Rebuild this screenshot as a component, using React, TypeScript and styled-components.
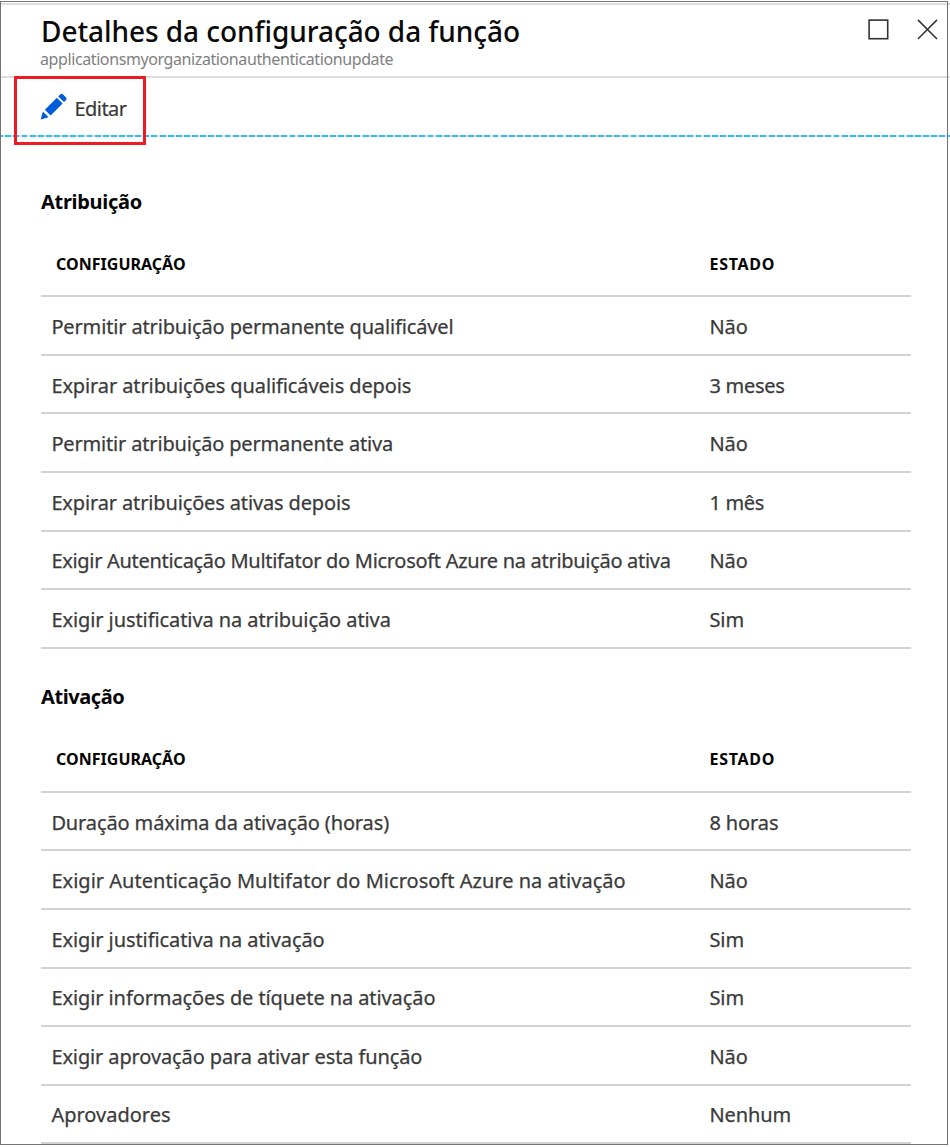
import React from "react";
import styled, { createGlobalStyle } from "styled-components";

const GlobalStyle = createGlobalStyle`
  *, *::before, *::after { box-sizing: border-box; }
  body {
    margin: 0;
    background: #fff;
    font-family: "Noto Sans", "Segoe UI", sans-serif;
    color: #3a3a3a;
  }
`;

const Page = styled.main`
  position: relative;
  width: 950px;
  height: 1147px;
  overflow: hidden;
  padding-top: 3px;
`;

const Frame = styled.div`
  position: absolute;
  inset: 1px 2px 2px 0;
  border: 1px solid #757575;
  pointer-events: none;
`;

const Header = styled.header`
  display: flex;
  justify-content: space-between;
  height: 75px;
  padding: 7px 12px 0 40px;
  border-top: 2px solid #dedede;
  border-bottom: 2px solid #dcdcdc;
`;

const Title = styled.h1`
  margin: 0 0 0 1px;
  font-size: 28px;
  font-weight: 500;
  line-height: 38px;
  letter-spacing: -0.06px;
  color: #0a0a0a;
  white-space: nowrap;
`;

const Subtitle = styled.p`
  margin: -1px 0 0;
  font-size: 16px;
  line-height: 20px;
  letter-spacing: -0.4px;
  color: #808080;
  white-space: nowrap;
`;

const WindowControls = styled.div`
  display: flex;
  gap: 28px;
  padding-top: 7px;
`;

const Toolbar = styled.div`
  display: flex;
  align-items: flex-start;
  height: 57px;
  padding: 15px 0 0 40px;
`;

const DashedRule = styled.div`
  height: 2px;
  background: repeating-linear-gradient(90deg, #2bc0f0 0 5.9px, #dfe3e6 5.9px 8.12px);
  background-position: -2.8px 0;
  background-size: calc(100% + 12px) 2px;
`;

const EditButton = styled.button`
  position: relative;
  display: flex;
  gap: 7.5px;
  padding: 0;
  border: 0;
  background: none;
  font: 400 20px/28px "Noto Sans", "Segoe UI", sans-serif;
  letter-spacing: -0.55px;
  color: #3a3a3a;
  -webkit-text-stroke: 0.2px currentColor;

  span {
    padding-top: 2px;
  }

  &::after {
    content: "";
    position: absolute;
    left: -26px;
    top: -17px;
    width: 132px;
    height: 69px;
    border: 3px solid #ed1c24;
  }
`;

const Section = styled.section<{ $top: number }>`
  margin: ${(p) => p.$top}px 39px 0 41px;
`;

const SectionTitle = styled.h2<{ $tracking: number }>`
  margin: 0;
  font-size: 20px;
  font-weight: 700;
  line-height: 28px;
  letter-spacing: ${(p) => p.$tracking}px;
  color: #050505;
`;

const TableHead = styled.div<{ $height: number }>`
  display: grid;
  grid-template-columns: 668.5px 1fr;
  height: ${(p) => p.$height}px;
  padding-top: 36px;
  border-bottom: 2px solid #d3d3d3;
`;

const HeadCell = styled.div<{ $inset?: number; $tracking: number }>`
  padding-left: ${(p) => p.$inset ?? 0}px;
  font-size: 16px;
  font-weight: 700;
  line-height: 24px;
  letter-spacing: ${(p) => p.$tracking}px;
  color: #050505;
`;

const Row = styled.div`
  display: grid;
  grid-template-columns: 668.4px 1fr;
  align-items: center;
  height: 58.55px;
  padding-top: 3px;
  border-bottom: 2px solid #d3d3d3;
`;

const Cell = styled.div<{ $inset?: number; $tracking: number }>`
  padding-left: ${(p) => p.$inset ?? 0}px;
  font-size: 20px;
  line-height: 28px;
  letter-spacing: ${(p) => p.$tracking}px;
  white-space: nowrap;
  -webkit-text-stroke: 0.25px currentColor;
`;

type Text = [label: string, tracking: number];

const assignment: [Text, Text][] = [
  [["Permitir atribuição permanente qualificável", -0.145], ["Não", 0]],
  [["Expirar atribuições qualificáveis depois", -0.11], ["3 meses", -0.25]],
  [["Permitir atribuição permanente ativa", -0.165], ["Não", 0]],
  [["Expirar atribuições ativas depois", -0.14], ["1 mês", -0.3]],
  [["Exigir Autenticação Multifator do Microsoft Azure na atribuição ativa", -0.3], ["Não", 0]],
  [["Exigir justificativa na atribuição ativa", -0.08], ["Sim", 0]],
];

const activation: [Text, Text][] = [
  [["Duração máxima da ativação (horas)", -0.125], ["8 horas", -0.1]],
  [["Exigir Autenticação Multifator do Microsoft Azure na ativação", 0.02], ["Não", 0]],
  [["Exigir justificativa na ativação", -0.08], ["Sim", 0]],
  [["Exigir informações de tíquete na ativação", -0.09], ["Sim", 0]],
  [["Exigir aprovação para ativar esta função", -0.12], ["Não", 0]],
  [["Aprovadores", 0], ["Nenhum", -0.1]],
];

const PencilIcon = () => (
  <svg width="27" height="27" viewBox="0 0 27 27" fill="#015cda">
    <path d="M0.7 26.4 L2.9 18.5 L8.6 24.2 Z" />
    <path d="M4.9 16.7 L16.9 4.7 L22.6 10.4 L10.6 22.4 Z" />
    <path d="M18.2 3.4 L20.3 1.3 Q21.5 0.2 22.8 1.3 L26.1 4.6 Q27 5.9 26.1 7 L24 9.1 Z" />
  </svg>
);

const SettingsTable = ({ title, top, headHeight, rows }: {
  title: Text;
  top: number;
  headHeight: number;
  rows: [Text, Text][];
}) => (
  <Section $top={top}>
    <SectionTitle $tracking={title[1]}>{title[0]}</SectionTitle>
    <TableHead $height={headHeight}>
      <HeadCell $inset={15} $tracking={0.03}>CONFIGURAÇÃO</HeadCell>
      <HeadCell $tracking={0.7}>ESTADO</HeadCell>
    </TableHead>
    {rows.map(([name, state]) => (
      <Row key={name[0]}>
        <Cell $inset={10.4} $tracking={name[1]}>{name[0]}</Cell>
        <Cell $tracking={state[1]}>{state[0]}</Cell>
      </Row>
    ))}
  </Section>
);

export default function App() {
  return (
    <Page>
      <GlobalStyle />
      <Header>
        <div>
          <Title>Detalhes da configuração da função</Title>
          <Subtitle>applicationsmyorganizationauthenticationupdate</Subtitle>
        </div>
        <WindowControls>
          <svg width="21" height="21" viewBox="0 0 21 21" fill="none" stroke="#333" strokeWidth="1.6">
            <rect x="1.1" y="1.1" width="18.6" height="18.6" />
          </svg>
          <svg width="21" height="21" viewBox="0 0 21 21" fill="none" stroke="#333" strokeWidth="1.5">
            <path d="M0.9 0.9 L20 20 M20 0.9 L0.9 20" />
          </svg>
        </WindowControls>
      </Header>
      <Toolbar>
        <EditButton>
          <PencilIcon />
          <span>Editar</span>
        </EditButton>
      </Toolbar>
      <DashedRule />
      <SettingsTable title={["Atribuição", -0.3]} top={51} headHeight={81.4} rows={assignment} />
      <SettingsTable title={["Ativação", -0.42]} top={34.2} headHeight={82} rows={activation} />
      <Frame />
    </Page>
  );
}
